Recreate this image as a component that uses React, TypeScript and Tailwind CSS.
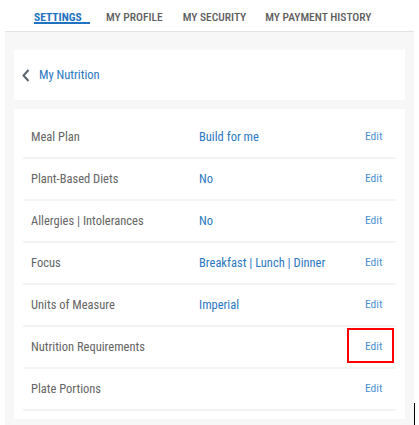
import React from "react";

const rows: { label: string; value: string }[] = [
  { label: "Meal Plan", value: "Build for me" },
  { label: "Plant-Based Diets", value: "No" },
  { label: "Allergies | Intolerances", value: "No" },
  { label: "Focus", value: "Breakfast | Lunch | Dinner" },
  { label: "Units of Measure", value: "Imperial" },
  { label: "Nutrition Requirements", value: "" },
  { label: "Plate Portions", value: "" },
];

export default function App() {
  return (
    <div
      className="relative w-[419px] h-[425px] bg-white overflow-hidden"
      style={{ fontFamily: "Roboto, 'Noto Sans', sans-serif" }}
    >
      <div className="h-[31px] flex items-start pt-[9px] text-[11.5px] font-stretch-condensed">
        <div className="ml-[34px] w-[56px] relative">
          <span className="font-bold text-[#1f72c0] font-stretch-semi-condensed">SETTINGS</span>
          <div className="absolute left-0 top-[13px] w-[56px] h-[2px] bg-[#1f72c0]" />
        </div>
        <span className="ml-[16px] font-medium text-[#5e5e5e]">MY PROFILE</span>
        <span className="ml-[20px] font-medium text-[#5e5e5e]">MY SECURITY</span>
        <span className="ml-[19px] font-medium text-[#5e5e5e]">MY PAYMENT HISTORY</span>
      </div>
      <div className="ml-[5px] w-[409px] border-t border-[#e3e3e3] bg-[#f7f7f7] pt-[18px] px-[9px] pb-[6px]">
        <div className="h-[50px] bg-white flex items-center pl-[8px]">
          <svg width="8" height="13" viewBox="0 0 8 13">
            <path d="M6.5 1 L1.5 6.5 L6.5 12" fill="none" stroke="#5b6670" strokeWidth="2" />
          </svg>
          <span className="ml-[9px] text-[12.5px] font-[450] text-[#2a78c2] font-stretch-condensed">My Nutrition</span>
        </div>
        <div className="mt-[9px] bg-white px-[9px] py-[8px]">
          {rows.map((r) => (
            <div key={r.label} className="h-[42px] border-b-2 border-[#f3f3f3] flex items-center pl-[8px] text-[12.5px] font-stretch-condensed">
              <span className="w-[168px] text-[#646464]">{r.label}</span>
              <span className="w-[166px] text-[#2a78c2] font-[450]">{r.value}</span>
              <span className="relative text-[11.5px] text-[#4a8fd3]">
                Edit
                {r.label === "Nutrition Requirements" && (
                  <span className="absolute left-[-18px] top-[-10px] w-[47px] h-[35px] border-2 border-[#ff0000]" />
                )}
              </span>
            </div>
          ))}
        </div>
      </div>
      <div className="absolute left-[414px] top-[403px] w-[1px] h-[22px] bg-black" />
    </div>
  );
}
